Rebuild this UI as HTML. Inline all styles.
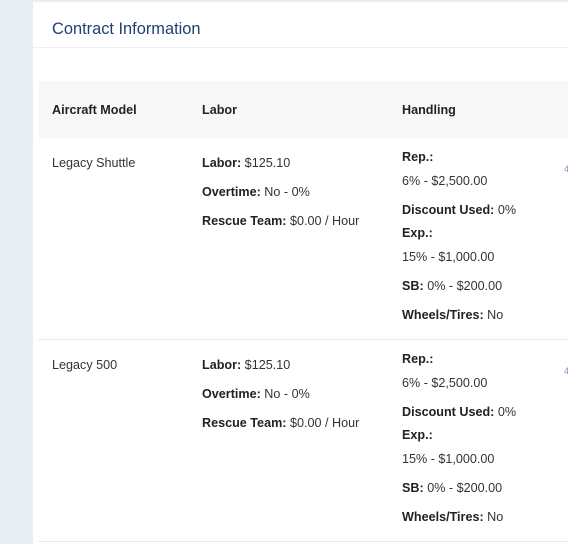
<!DOCTYPE html><html style="overflow:hidden;height:544px"><head><style>
body{margin:0;width:568px;height:544px;background:#e8eff3;font-family:"Liberation Sans",Arial,sans-serif;font-size:12.6px;color:#333;position:relative;overflow:hidden}
.card{position:absolute;left:33px;top:2px;width:540px;height:542px;background:#fff}
.t{position:absolute;white-space:nowrap}
b{color:#222}
</style></head><body>
<div class="card"></div>
<div class="t" style="left:52px;top:20px;font-size:16.4px;color:#1f3f75">Contract Information</div>
<div style="position:absolute;left:33px;top:47px;width:535px;height:1px;background:#f0f0f0"></div>
<div style="position:absolute;left:38px;top:81px;width:530px;height:57px;background:#f8f8f8"></div>
<div class="t" style="left:52px;top:103px"><b>Aircraft Model</b></div>
<div class="t" style="left:202px;top:103px"><b>Labor</b></div>
<div class="t" style="left:402px;top:103px"><b>Handling</b></div>

<div class="t" style="left:52px;top:156px">Legacy Shuttle</div>
<div class="t" style="left:202px;top:156px"><b>Labor:</b> $125.10</div>
<div class="t" style="left:202px;top:185px"><b>Overtime:</b> No - 0%</div>
<div class="t" style="left:202px;top:214px"><b>Rescue Team:</b> $0.00 / Hour</div>
<div class="t" style="left:402px;top:150px"><b>Rep.:</b></div>
<div class="t" style="left:402px;top:174px">6% - $2,500.00</div>
<div class="t" style="left:402px;top:203px"><b>Discount Used:</b> 0%</div>
<div class="t" style="left:402px;top:226px"><b>Exp.:</b></div>
<div class="t" style="left:402px;top:250px">15% - $1,000.00</div>
<div class="t" style="left:402px;top:279px"><b>SB:</b> 0% - $200.00</div>
<div class="t" style="left:402px;top:308px"><b>Wheels/Tires:</b> No</div>
<div class="t" style="left:564px;top:164px;color:#7a9cc6;font-size:9px">4</div>
<div style="position:absolute;left:38px;top:339px;width:530px;height:1px;background:#e8e8e8"></div>

<div class="t" style="left:52px;top:358px">Legacy 500</div>
<div class="t" style="left:202px;top:358px"><b>Labor:</b> $125.10</div>
<div class="t" style="left:202px;top:387px"><b>Overtime:</b> No - 0%</div>
<div class="t" style="left:202px;top:416px"><b>Rescue Team:</b> $0.00 / Hour</div>
<div class="t" style="left:402px;top:352px"><b>Rep.:</b></div>
<div class="t" style="left:402px;top:376px">6% - $2,500.00</div>
<div class="t" style="left:402px;top:405px"><b>Discount Used:</b> 0%</div>
<div class="t" style="left:402px;top:428px"><b>Exp.:</b></div>
<div class="t" style="left:402px;top:452px">15% - $1,000.00</div>
<div class="t" style="left:402px;top:481px"><b>SB:</b> 0% - $200.00</div>
<div class="t" style="left:402px;top:510px"><b>Wheels/Tires:</b> No</div>
<div class="t" style="left:564px;top:366px;color:#7a9cc6;font-size:9px">4</div>
<div style="position:absolute;left:38px;top:541px;width:530px;height:1px;background:#e8e8e8"></div>
</body></html>
